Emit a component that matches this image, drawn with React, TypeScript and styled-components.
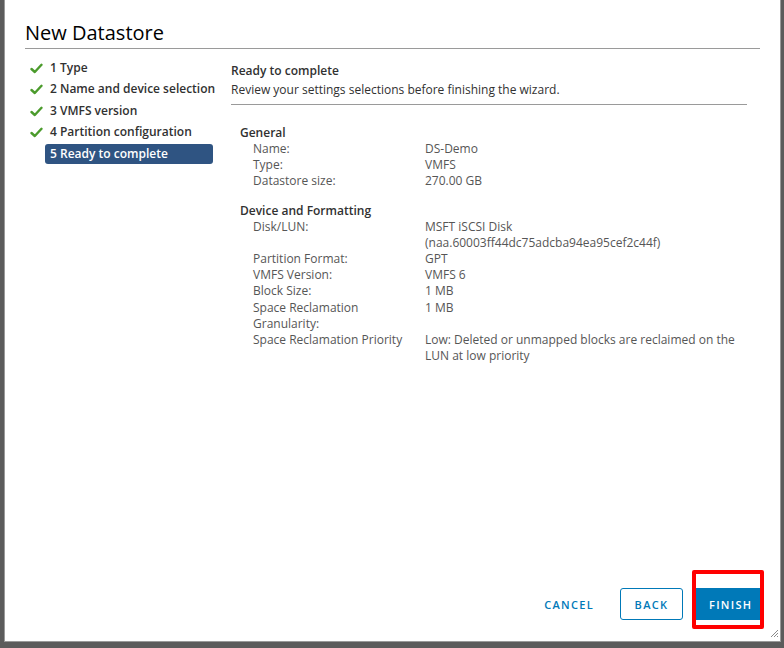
import React from "react";
import styled, { createGlobalStyle } from "styled-components";

const GlobalStyle = createGlobalStyle`
  html, body {
    margin: 0;
    padding: 0;
    background: #5c5c5c;
    font-family: "Open Sans", "Liberation Sans", sans-serif;
  }
  #root {
    height: 648px;
    overflow: hidden;
  }
`;

interface Row {
  label: string;
  value: React.ReactNode;
}

interface Section {
  title: string;
  rows: Row[];
}

const steps = [
  "1 Type",
  "2 Name and device selection",
  "3 VMFS version",
  "4 Partition configuration",
  "5 Ready to complete",
];

const sections: Section[] = [
  {
    title: "General",
    rows: [
      { label: "Name:", value: "DS-Demo" },
      { label: "Type:", value: "VMFS" },
      { label: "Datastore size:", value: "270.00 GB" },
    ],
  },
  {
    title: "Device and Formatting",
    rows: [
      {
        label: "Disk/LUN:",
        value: (
          <>
            MSFT iSCSI Disk
            <br />
            (naa.60003ff44dc75adcba94ea95cef2c44f)
          </>
        ),
      },
      { label: "Partition Format:", value: "GPT" },
      { label: "VMFS Version:", value: "VMFS 6" },
      { label: "Block Size:", value: "1 MB" },
      { label: "Space Reclamation Granularity:", value: "1 MB" },
      {
        label: "Space Reclamation Priority",
        value: (
          <>
            Low: Deleted or unmapped blocks are reclaimed on the
            <br />
            LUN at low priority
          </>
        ),
      },
    ],
  },
];

const Check = () => (
  <svg width="13" height="11" viewBox="0 0 13 11">
    <path
      d="M1.5 6 L4.8 9 L11.5 1.8"
      fill="none"
      stroke="#4b9b2c"
      strokeWidth="2.4"
      strokeLinecap="round"
      strokeLinejoin="round"
    />
  </svg>
);

export default function App() {
  return (
    <>
      <GlobalStyle />
      <Modal>
        <Header>
          <Title>New Datastore</Title>
        </Header>
        <Body>
          <StepNav>
            {steps.map((s, i) => {
              const done = i < steps.length - 1;
              return (
                <Step key={s}>
                  <StepIcon>{done && <Check />}</StepIcon>
                  <StepLabel active={!done}>{s}</StepLabel>
                </Step>
              );
            })}
          </StepNav>
          <Content>
            <PageTitle>Ready to complete</PageTitle>
            <PageDesc>Review your settings selections before finishing the wizard.</PageDesc>
            <Summary>
              {sections.map((sec) => (
                <SectionBlock key={sec.title}>
                  <SectionTitle>{sec.title}</SectionTitle>
                  <Grid>
                    {sec.rows.map((r) => (
                      <React.Fragment key={r.label}>
                        <Label>{r.label}</Label>
                        <Value>{r.value}</Value>
                      </React.Fragment>
                    ))}
                  </Grid>
                </SectionBlock>
              ))}
            </Summary>
          </Content>
        </Body>
        <Footer>
          <FlatButton>Cancel</FlatButton>
          <OutlineButton>Back</OutlineButton>
          <Highlight>
            <PrimaryButton>Finish</PrimaryButton>
          </Highlight>
        </Footer>
        <Grip width="9" height="9" viewBox="0 0 9 9">
          <path d="M8 1 L1 8 M8 4 L4 8 M8 7 L7 8" stroke="#8a8a8a" strokeWidth="1" />
        </Grip>
      </Modal>
    </>
  );
}

const Modal = styled.div`
  position: relative;
  box-sizing: border-box;
  margin-left: 4px;
  width: 777px;
  height: 642px;
  background: #fff;
  border: 1px solid #9a9a9a;
  border-top: none;
  display: flex;
  flex-direction: column;
`;

const Header = styled.div`
  padding: 19px 20px 0 20px;
`;

const Title = styled.h1`
  margin: 0;
  font-size: 20px;
  font-weight: 400;
  color: #000;
  line-height: 28px;
  padding-bottom: 1px;
  border-bottom: 1px solid #9a9a9a;
`;

const Body = styled.div`
  flex: 1;
  display: flex;
  padding: 9px 0 0 20px;
`;

const StepNav = styled.div`
  box-sizing: border-box;
  width: 188px;
  min-width: 0;
  flex: none;
  display: flex;
  flex-direction: column;
  gap: 1.4px;
  padding-left: 5px;
`;

const Step = styled.div`
  display: flex;
  align-items: center;
  height: 20px;
  min-width: 0;
`;

const StepIcon = styled.span`
  flex: none;
  width: 15px;
  display: flex;
  align-items: center;
  padding-top: 1px;
`;

const StepLabel = styled.span<{ active?: boolean }>`
  flex: 1;
  min-width: 0;
  height: 20px;
  line-height: 20px;
  padding: 0 0 0 5px;
  border-radius: 3px;
  font-size: 12px;
  font-weight: 600;
  color: ${(p) => (p.active ? "#fff" : "#313131")};
  background: ${(p) => (p.active ? "#2f5482" : "transparent")};
  white-space: nowrap;
`;

const Content = styled.div`
  flex: none;
  width: 516px;
  margin-left: 18px;
  padding-top: 3px;
`;

const PageTitle = styled.div`
  font-size: 12px;
  font-weight: 600;
  color: #313131;
  line-height: 20px;
`;

const PageDesc = styled.div`
  font-size: 12px;
  color: #313131;
  line-height: 18px;
  padding-bottom: 5px;
  border-bottom: 1px solid #9a9a9a;
`;

const Summary = styled.div`
  padding: 19px 0 0 9px;
  display: flex;
  flex-direction: column;
  gap: 12px;
`;

const SectionBlock = styled.div``;

const SectionTitle = styled.div`
  font-size: 12px;
  font-weight: 600;
  color: #313131;
  line-height: 17px;
`;

const Grid = styled.div`
  display: grid;
  grid-template-columns: 172px 1fr;
  padding-left: 13px;
  font-size: 12px;
  line-height: 16.2px;
  color: #565656;
`;

const Label = styled.div`
  max-width: 160px;
`;

const Value = styled.div`
  white-space: nowrap;
`;

const Footer = styled.div`
  display: flex;
  justify-content: flex-end;
  align-items: center;
  gap: 13px;
  padding: 0 20px 21px 0;
`;

const ButtonBase = styled.button`
  box-sizing: border-box;
  height: 32px;
  padding: 0 12px;
  font-family: "Open Sans", "Liberation Sans", sans-serif;
  font-size: 11px;
  font-weight: 600;
  letter-spacing: 0.12em;
  text-transform: uppercase;
  border-radius: 3px;
  cursor: pointer;
`;

const FlatButton = styled(ButtonBase)`
  background: transparent;
  border: 1px solid transparent;
  color: #0079b8;
`;

const OutlineButton = styled(ButtonBase)`
  background: #fff;
  border: 1px solid #0079b8;
  color: #0079b8;
  width: 63px;
`;

const PrimaryButton = styled(ButtonBase)`
  background: #0079b8;
  border: 1px solid #0079b8;
  color: #fff;
  width: 64px;
  border-radius: 0;
  display: block;
`;

const Highlight = styled.div`
  position: relative;
  &::after {
    content: "";
    position: absolute;
    left: -4px;
    right: -4px;
    top: -18px;
    bottom: -9px;
    border: 4px solid #ff0000;
    border-radius: 2px;
    pointer-events: none;
  }
`;

const Grip = styled.svg`
  position: absolute;
  right: 1px;
  bottom: 3px;
`;
